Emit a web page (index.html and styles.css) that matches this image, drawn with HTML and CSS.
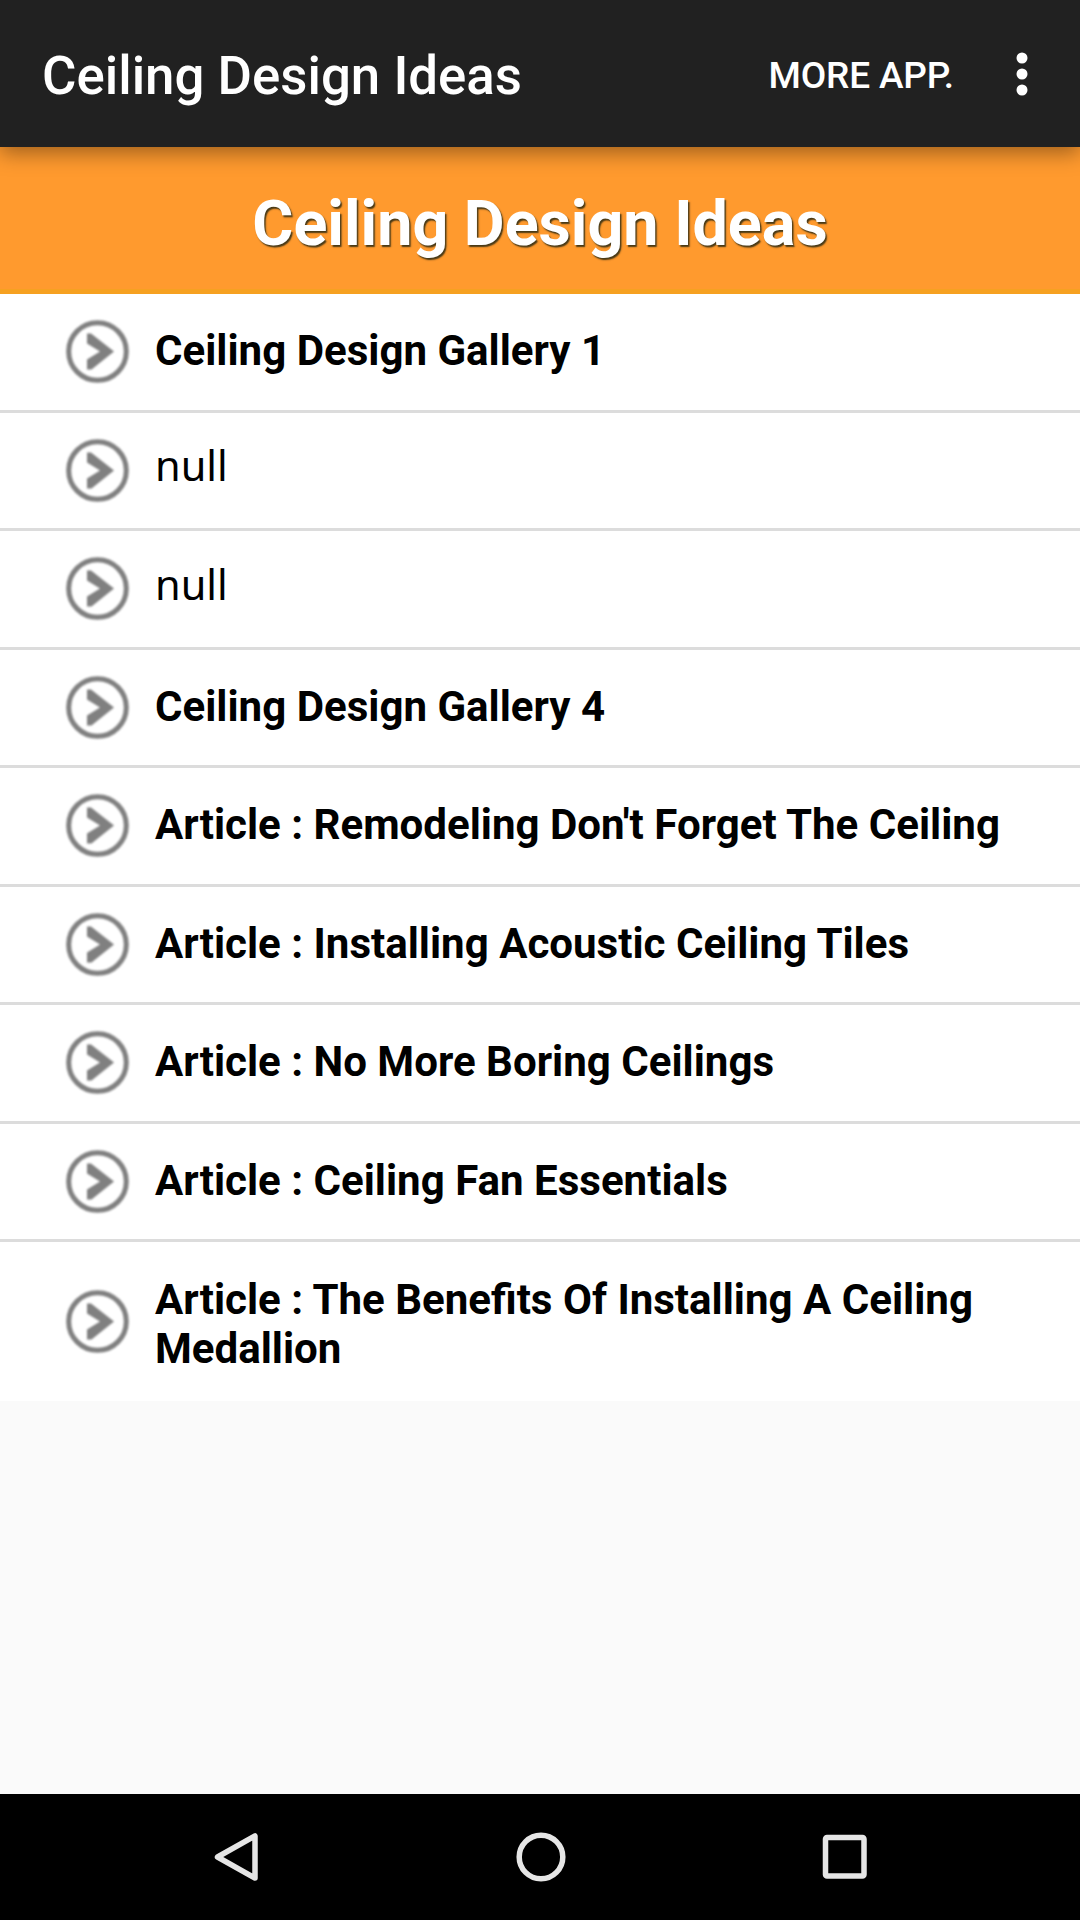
FILE: index.html
```
<!DOCTYPE html>
<html lang="en">
<head>
<meta charset="utf-8">
<title>Ceiling Design Ideas</title>
<link rel="stylesheet" href="styles.css">
</head>
<body>
<svg class="defs" width="0" height="0" aria-hidden="true">
  <symbol id="go" viewBox="0 0 63 63">
    <circle cx="31.5" cy="31.5" r="28.8" fill="none" stroke="#808080" stroke-width="5"/>
    <path d="M21 13.500 H25 L48 31.500 L25.500 49.500 H21 V39.500 L34 31.500 L21 23.500Z" fill="#808080"/>
  </symbol>
</svg>
<div class="screen">
  <header class="appbar">
    <div class="appbar-title">Ceiling Design Ideas</div>
    <div class="appbar-action">MORE APP.</div>
    <svg class="overflow" viewBox="0 0 12 44"><circle cx="6" cy="6" r="5.5"/><circle cx="6" cy="22" r="5.500"/><circle cx="6" cy="38" r="5.500"/></svg>
  </header>
  <h1 class="banner">Ceiling Design Ideas</h1>
  <ul class="list">
    <li class="row"><svg class="go"><use href="#go"/></svg><span class="label">Ceiling Design Gallery 1</span></li>
    <li class="row"><svg class="go"><use href="#go"/></svg><span class="label empty">null</span></li>
    <li class="row"><svg class="go"><use href="#go"/></svg><span class="label empty">null</span></li>
    <li class="row"><svg class="go"><use href="#go"/></svg><span class="label">Ceiling Design Gallery 4</span></li>
    <li class="row"><svg class="go"><use href="#go"/></svg><span class="label">Article : Remodeling Don't Forget The Ceiling</span></li>
    <li class="row"><svg class="go"><use href="#go"/></svg><span class="label">Article : Installing Acoustic Ceiling Tiles</span></li>
    <li class="row"><svg class="go"><use href="#go"/></svg><span class="label">Article : No More Boring Ceilings</span></li>
    <li class="row"><svg class="go"><use href="#go"/></svg><span class="label">Article : Ceiling Fan Essentials</span></li>
    <li class="row tall"><svg class="go"><use href="#go"/></svg><span class="label">Article : The Benefits Of Installing A Ceiling Medallion</span></li>
  </ul>
  <nav class="navbar">
    <svg class="nav-icon" viewBox="0 0 52 52"><path d="M44 5 V47 L6.500 26Z"/></svg>
    <svg class="nav-icon" viewBox="0 0 52 52"><circle cx="26" cy="26" r="21.800"/></svg>
    <svg class="nav-icon" viewBox="0 0 52 52"><rect x="6.500" y="6.500" width="38.500" height="38.500" rx="1.500"/></svg>
  </nav>
</div>
</body>
</html>
```
FILE: styles.css
```
body {
  margin: 0;
  background: #fafafa;
  font-family: Roboto, "Liberation Sans", sans-serif;
}
.defs { display: block; }
.screen {
  display: flex;
  flex-direction: column;
  width: 1080px;
  height: 1920px;
  overflow: hidden;
}
.appbar {
  display: flex;
  align-items: center;
  flex: none;
  box-sizing: border-box;
  height: 147px;
  padding: 4px 52px 0 42px;
  background: #212121;
  color: #fff;
  box-shadow: 0 6px 20px rgba(0, 0, 0, 0.38);
  z-index: 1;
}
.appbar-title {
  flex: 1;
  font-size: 52.800px;
  font-weight: 500;
  white-space: nowrap;
}
.appbar-action {
  margin-right: 62px;
  font-size: 37px;
  font-weight: 500;
  letter-spacing: -0.150px;
}
.overflow {
  width: 12px;
  height: 44px;
  margin-top: -4px;
  fill: #fff;
}
.banner {
  display: flex;
  align-items: center;
  justify-content: center;
  flex: none;
  box-sizing: border-box;
  height: 147px;
  margin: 0;
  padding-top: 11px;
  border-bottom: 5px solid #f6a121;
  background: #ff9a2e;
  color: #fff;
  font-size: 62.800px;
  font-weight: 700;
  text-shadow: 1.500px 1.500px 1.500px rgba(50, 45, 20, 0.9);
}
.list {
  flex: 1;
  margin: 0;
  padding: 0;
  list-style: none;
}
.row {
  display: flex;
  align-items: center;
  gap: 26px;
  box-sizing: border-box;
  height: 118.500px;
  padding: 0 60px 0 66px;
  border-bottom: 3px solid #dcdcdc;
  background: #fff;
}
.row.tall {
  height: 159px;
  border-bottom: 0;
}
.go {
  flex: none;
  width: 63px;
  height: 63px;
  filter: blur(0.8px);
}
.label {
  margin-top: -2px;
  color: #000;
  font-size: 42.050px;
  font-weight: 700;
  line-height: 49px;
}
.tall .label { margin-top: 4px; }
.label.empty {
  margin-top: -9px;
  font-family: "Noto Sans", sans-serif;
  font-size: 41.500px;
  font-weight: 400;
}
.navbar {
  display: flex;
  align-items: center;
  justify-content: space-between;
  flex: none;
  box-sizing: border-box;
  height: 126px;
  padding: 0 209.500px 0 210.500px;
  background: #000;
}
.nav-icon {
  width: 52px;
  height: 52px;
  fill: none;
  stroke: #e6e6e6;
  stroke-width: 5.500;
  stroke-linejoin: round;
}
```
